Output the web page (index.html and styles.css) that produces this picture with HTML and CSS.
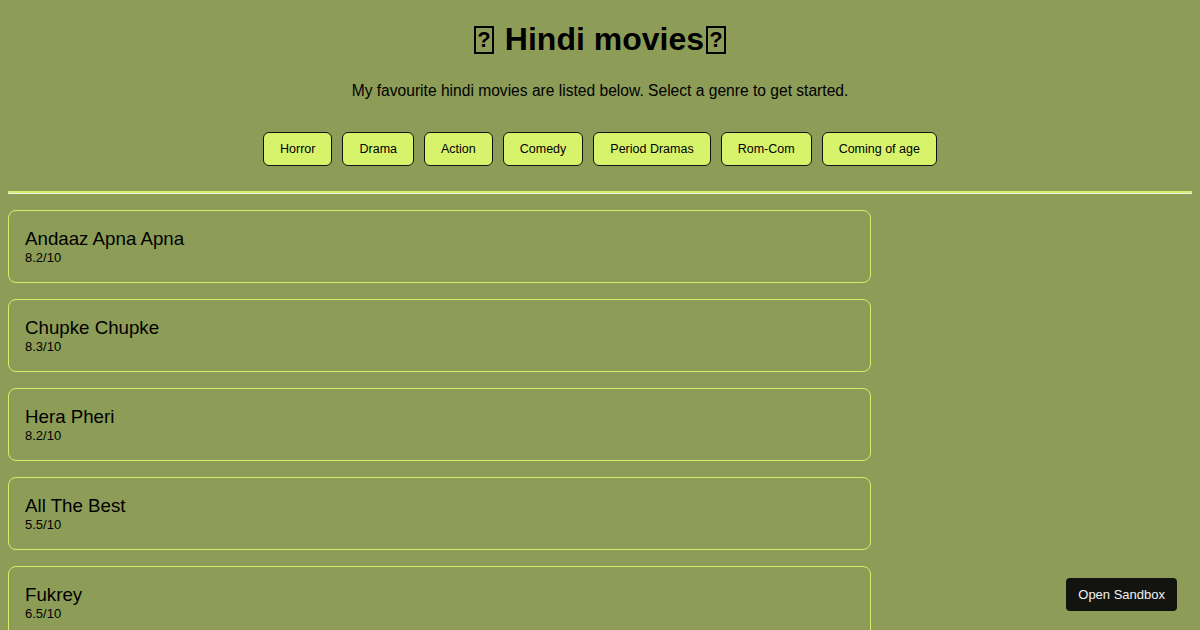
FILE: index.html
```html
<!DOCTYPE html>
<html lang="en">
<head>
<meta charset="utf-8">
<title>Hindi movies</title>
<link rel="stylesheet" href="styles.css">
</head>
<body>
<header class="header">
  <h1 class="title"><span class="tofu">?</span> Hindi movies<span class="tofu">?</span></h1>
  <p class="intro">My favourite hindi movies are listed below. Select a genre to get started.</p>
  <nav class="genres">
    <button class="genre">Horror</button>
    <button class="genre">Drama</button>
    <button class="genre">Action</button>
    <button class="genre">Comedy</button>
    <button class="genre">Period Dramas</button>
    <button class="genre">Rom-Com</button>
    <button class="genre">Coming of age</button>
  </nav>
</header>
<hr class="divider">
<ul class="movies">
  <li class="movie"><div class="movie-name">Andaaz Apna Apna</div><div class="movie-rating">8.2/10</div></li>
  <li class="movie"><div class="movie-name">Chupke Chupke</div><div class="movie-rating">8.3/10</div></li>
  <li class="movie"><div class="movie-name">Hera Pheri</div><div class="movie-rating">8.2/10</div></li>
  <li class="movie"><div class="movie-name">All The Best</div><div class="movie-rating">5.5/10</div></li>
  <li class="movie"><div class="movie-name">Fukrey</div><div class="movie-rating">6.5/10</div></li>
</ul>
<a class="sandbox" href="#">Open Sandbox</a>
</body>
</html>
```

FILE: styles.css
```css
html, body {
  margin: 0;
  padding: 0;
}
body {
  background: #8d9d57;
  color: #000;
  font-family: "Liberation Sans", Arial, sans-serif;
  padding: 0 8px;
  overflow: hidden;
}
.header {
  text-align: center;
  padding-top: 21px;
}
.title {
  margin: 0;
  font-size: 32px;
  line-height: 37px;
  font-weight: bold;
}
.tofu {
  display: inline-block;
  box-sizing: border-box;
  width: 20px;
  height: 28px;
  margin: 0 2px;
  border: 2px solid #000;
  font-size: 22px;
  line-height: 24px;
  text-align: center;
  overflow: hidden;
  vertical-align: -4px;
}
.intro {
  margin: 24px 0 0;
  font-size: 15.6px;
  line-height: 18px;
}
.genres {
  margin-top: 32px;
  display: flex;
  justify-content: center;
  gap: 10px;
}
.genre {
  font-family: "Liberation Sans", Arial, sans-serif;
  font-size: 12.5px;
  color: #000;
  background: #d7f36c;
  border: 1px solid #111;
  border-radius: 6px;
  height: 34px;
  padding: 0 16px;
  margin: 0;
}
.divider {
  margin: 25px 0 0;
  height: 0;
  border: none;
  border-top: 2px solid #d6ee70;
  border-bottom: 1px solid #eef2dc;
}
.movies {
  list-style: none;
  margin: 16px 0 0;
  padding: 0;
  display: flex;
  flex-direction: column;
  gap: 16px;
}
.movie {
  width: 70%;
  padding: 16px;
  border: 1px solid #d4f06a;
  border-radius: 8px;
}
.movie-name {
  font-size: 18.72px;
  line-height: 23px;
}
.movie-rating {
  font-size: 13px;
  line-height: 16px;
}
.sandbox {
  position: fixed;
  right: 23px;
  bottom: 19px;
  height: 33px;
  padding: 0 12px;
  display: flex;
  align-items: center;
  background: #131410;
  color: #f2f2f2;
  border-radius: 4px;
  font-size: 13px;
  text-decoration: none;
}
```
